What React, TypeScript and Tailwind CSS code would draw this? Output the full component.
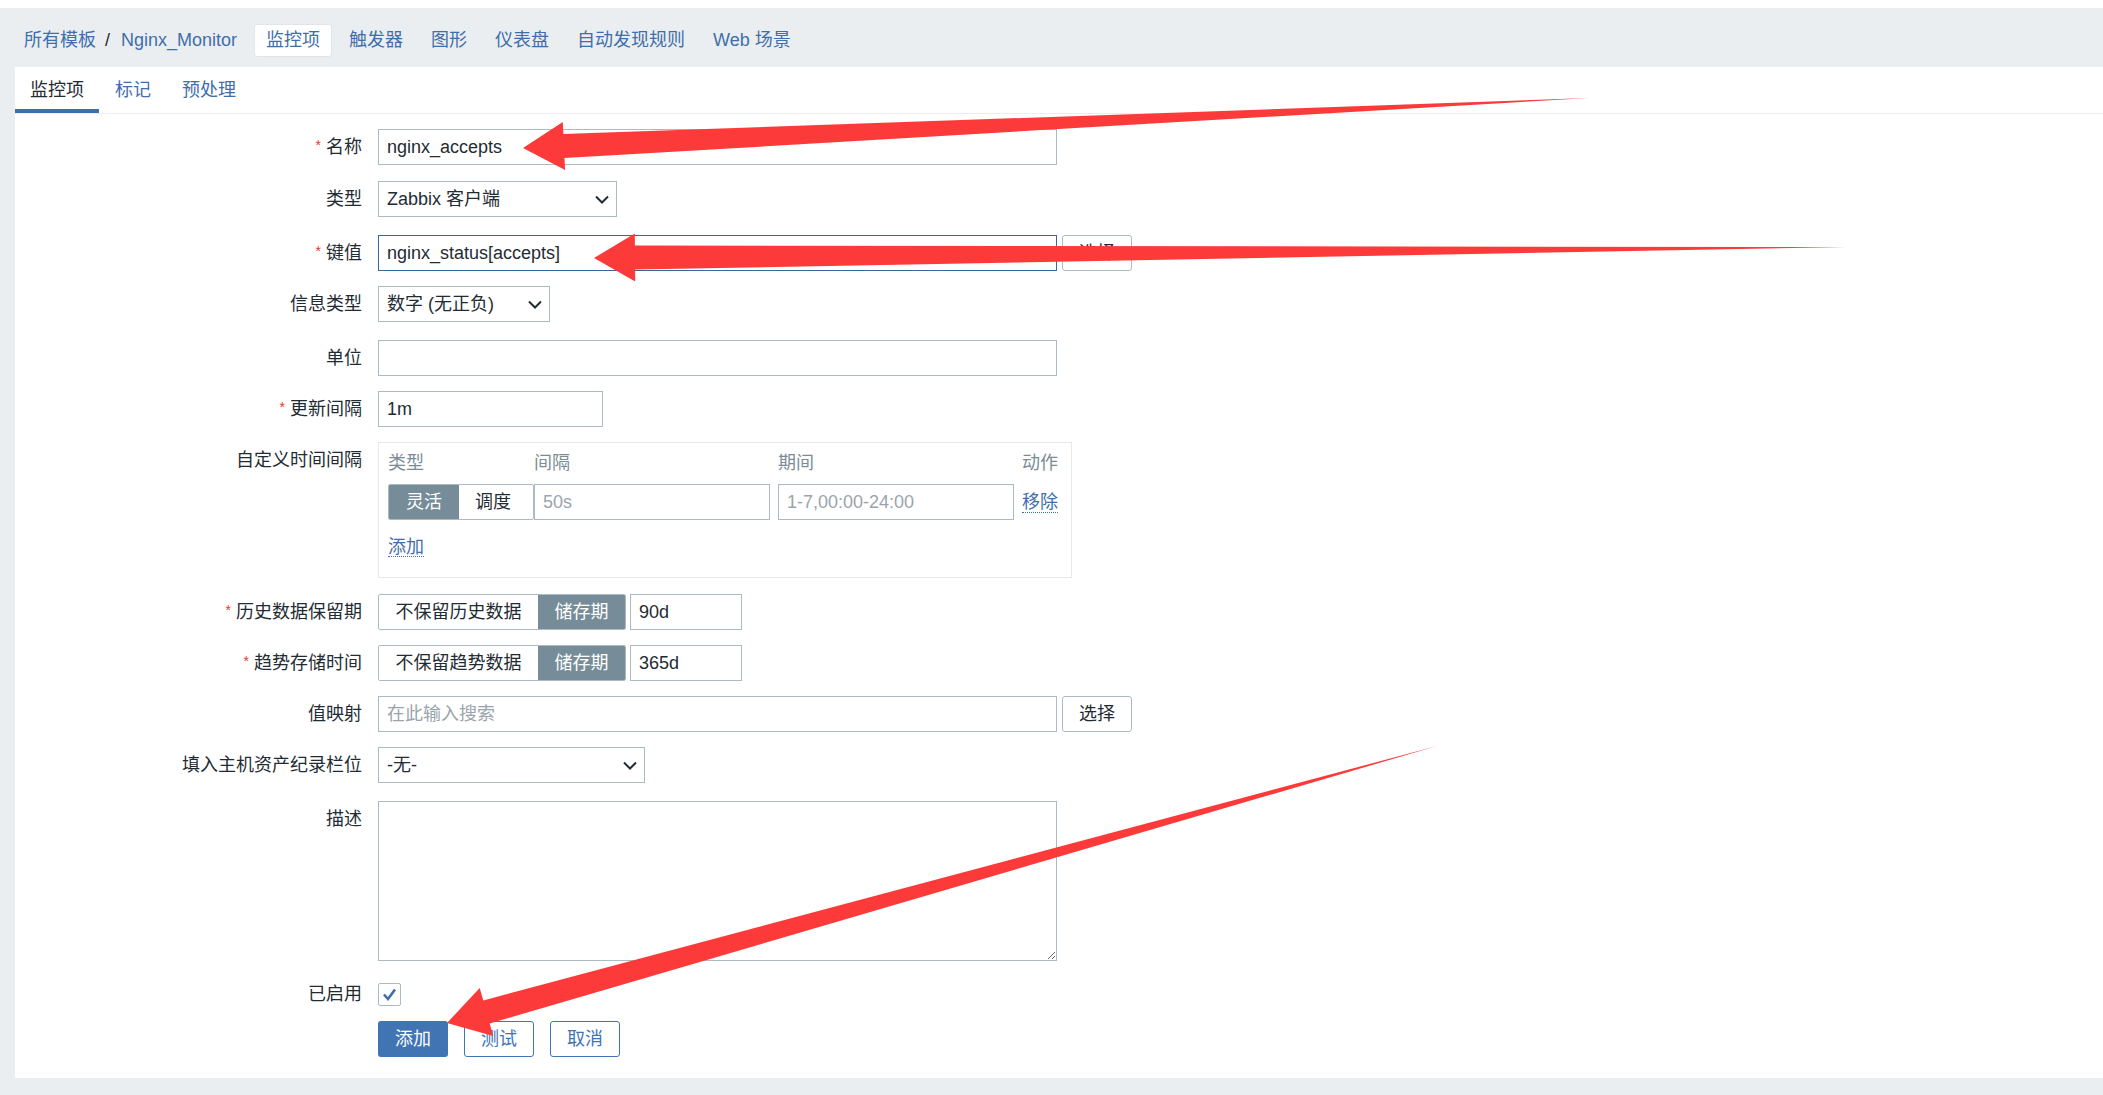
import type { ReactNode } from "react";

const LINK = "#3f6eaa";

type Pt = [number, number];

// red annotation arrows drawn over the form
const arrowPoints = (tip: Pt, tail: Pt, headLen = 41, headHalf = 24, shaftHalf = 12) => {
  const dx = tail[0] - tip[0];
  const dy = tail[1] - tip[1];
  const len = Math.hypot(dx, dy);
  const ux = dx / len;
  const uy = dy / len;
  const nx = -uy;
  const ny = ux;
  const bx = tip[0] + ux * headLen;
  const by = tip[1] + uy * headLen;
  const pts: Pt[] = [
    tip,
    [bx + nx * headHalf, by + ny * headHalf],
    [bx + nx * shaftHalf, by + ny * shaftHalf],
    tail,
    [bx - nx * shaftHalf, by - ny * shaftHalf],
    [bx - nx * headHalf, by - ny * headHalf],
  ];
  return pts.map((p) => `${p[0].toFixed(1)},${p[1].toFixed(1)}`).join(" ");
};

const Chevron = () => (
  <svg width="14" height="9" viewBox="0 0 14 9" className="shrink-0">
    <path d="M1 1.5 L7 7.5 L13 1.5" fill="none" stroke="#1f2c33" strokeWidth="2" />
  </svg>
);

const Select = ({ value, width }: { value: string; width: string }) => (
  <div className={`${width} h-[36px] border border-[#acbbc2] bg-white flex items-center justify-between pl-[8px] pr-[7px] text-[#1f2c33]`}>
    <span>{value}</span>
    <Chevron />
  </div>
);

const TextInput = ({
  value,
  placeholder,
  width,
  focused,
}: {
  value?: string;
  placeholder?: string;
  width: string;
  focused?: boolean;
}) => (
  <input
    readOnly
    defaultValue={value}
    placeholder={placeholder}
    className={`${width} h-[36px] border ${focused ? "border-[#38679d]" : "border-[#acbbc2]"} bg-white px-[8px] text-[18px] text-[#1f2c33] placeholder:text-[#9aa5ab] outline-none`}
  />
);

const GrayButton = ({ children }: { children: ReactNode }) => (
  <button className="w-[70px] h-[36px] border border-[#acbbc2] rounded-[3px] bg-white text-[#1f2c33] text-[18px]">
    {children}
  </button>
);

const Segmented = ({ items }: { items: { label: string; width: string; active?: boolean }[] }) => (
  <div className="flex h-[36px] border border-[#acbbc2] rounded-[2px] overflow-hidden">
    {items.map((it) => (
      <div
        key={it.label}
        className={`${it.width} flex items-center justify-center ${it.active ? "bg-[#768d99] text-white" : "bg-white text-[#1f2c33]"}`}
      >
        {it.label}
      </div>
    ))}
  </div>
);

const Row = ({
  label,
  required,
  mt = "",
  children,
}: {
  label: string;
  required?: boolean;
  mt?: string;
  children: ReactNode;
}) => (
  <div className={`flex ${mt}`}>
    <div className="w-[347px] shrink-0 h-[36px] leading-[36px] text-right text-[#1f2c33]">
      {required && <span className="relative -top-[3px] mr-[5px] text-[14px] text-[#e33734]">*</span>}
      {label}
    </div>
    <div className="ml-[16px] flex items-start gap-[5px]">{children}</div>
  </div>
);

const DottedLink = ({ children }: { children: ReactNode }) => (
  <span className="whitespace-nowrap text-[#3f6eaa] border-b border-dotted border-[#3f6eaa] leading-[20px]">{children}</span>
);

export default function App() {
  const navItems = ["触发器", "图形", "仪表盘", "自动发现规则", "Web 场景"];

  return (
    <div className="relative w-[2103px] h-[1095px] overflow-hidden bg-[#ebeef0] text-[18px] font-['Liberation_Sans','Noto_Sans_CJK_SC',sans-serif]">
      <div className="h-[8px] bg-white" />

      {/* breadcrumb / sub navigation */}
      <header className="h-[59px] pt-[5px] flex items-center pl-[24px]">
        <span style={{ color: LINK }}>所有模板</span>
        <span className="ml-[9px] mr-[11px] text-[#1f2c33]">/</span>
        <span className="text-[#3f6eaa]">Nginx_Monitor</span>
        <div className="ml-[17px] flex items-center gap-[6px]">
          <span className="h-[33px] px-[11px] flex items-center bg-white border border-[#e0e5e8] rounded-[3px] text-[#3f6eaa]">
            监控项
          </span>
          {navItems.map((n) => (
            <span key={n} className="px-[11px] text-[#3f6eaa]">
              {n}
            </span>
          ))}
        </div>
      </header>

      <main className="ml-[15px] h-[1011px] bg-white">
        {/* tabs */}
        <div className="h-[47px] flex border-b border-[#ebeef0]">
          <div className="h-full px-[15px] pt-[4px] flex items-center border-b-4 border-[#3f6eaa] text-[#1f2c33]">监控项</div>
          <div className="h-full px-[15px] ml-[1px] flex items-center text-[#3f6eaa]">标记</div>
          <div className="h-full px-[15px] ml-[1px] flex items-center text-[#3f6eaa]">预处理</div>
        </div>

        <div className="pt-[15px] flex flex-col gap-[15px]">
          <Row label="名称" required>
            <TextInput value="nginx_accepts" width="w-[679px]" />
          </Row>
          <Row label="类型" mt="mt-[1px]">
            <Select value="Zabbix 客户端" width="w-[239px]" />
          </Row>
          <Row label="键值" required mt="mt-[3px]">
            <TextInput value="nginx_status[accepts]" width="w-[679px]" focused />
            <GrayButton>选择</GrayButton>
          </Row>
          <Row label="信息类型">
            <Select value="数字 (无正负)" width="w-[172px]" />
          </Row>
          <Row label="单位" mt="mt-[3px]">
            <TextInput width="w-[679px]" />
          </Row>
          <Row label="更新间隔" required>
            <TextInput value="1m" width="w-[225px]" />
          </Row>
          <Row label="自定义时间间隔">
            <div className="w-[694px] h-[136px] border border-[#e6e9eb] pl-[9px] pr-[12px] pt-[4px]">
              <div className="h-[32px] flex items-center text-[#7b8c96] whitespace-nowrap">
                <span className="w-[146px] shrink-0">类型</span>
                <span className="w-[244px] shrink-0">间隔</span>
                <span className="w-[244px] shrink-0">期间</span>
                <span>动作</span>
              </div>
              <div className="mt-[5px] flex items-center">
                <div className="w-[146px] shrink-0">
                  <Segmented
                    items={[
                      { label: "灵活", width: "w-[70px]", active: true },
                      { label: "调度", width: "w-[68px]" },
                    ]}
                  />
                </div>
                <div className="w-[244px] shrink-0">
                  <TextInput placeholder="50s" width="w-[236px]" />
                </div>
                <div className="w-[244px] shrink-0">
                  <TextInput placeholder="1-7,00:00-24:00" width="w-[236px]" />
                </div>
                <DottedLink>移除</DottedLink>
              </div>
              <div className="mt-[17px] h-[20px] flex">
                <DottedLink>添加</DottedLink>
              </div>
            </div>
          </Row>
          <Row label="历史数据保留期" required mt="mt-[1px]">
            <div className="flex gap-[4px]">
              <Segmented
                items={[
                  { label: "不保留历史数据", width: "w-[159px]" },
                  { label: "储存期", width: "w-[87px]", active: true },
                ]}
              />
              <TextInput value="90d" width="w-[112px]" />
            </div>
          </Row>
          <Row label="趋势存储时间" required>
            <div className="flex gap-[4px]">
              <Segmented
                items={[
                  { label: "不保留趋势数据", width: "w-[159px]" },
                  { label: "储存期", width: "w-[87px]", active: true },
                ]}
              />
              <TextInput value="365d" width="w-[112px]" />
            </div>
          </Row>
          <Row label="值映射">
            <TextInput placeholder="在此输入搜索" width="w-[679px]" />
            <GrayButton>选择</GrayButton>
          </Row>
          <Row label="填入主机资产纪录栏位">
            <Select value="-无-" width="w-[267px]" />
          </Row>
          <Row label="描述" mt="mt-[3px]">
            <textarea readOnly className="w-[679px] h-[160px] border border-[#acbbc2] outline-none" />
          </Row>
          <Row label="已启用">
            <div className="h-[36px] flex items-center">
              <div className="w-[23px] h-[23px] border border-[#acbbc2] rounded-[2px] flex items-center justify-center">
                <svg width="15" height="13" viewBox="0 0 15 13">
                  <path d="M2 6.5 L6 11 L13 1.5" fill="none" stroke="#3f6eaa" strokeWidth="2.6" />
                </svg>
              </div>
            </div>
          </Row>
        </div>

        <div className="mt-[9px] ml-[363px] flex gap-[16px]">
          <button className="w-[70px] h-[36px] rounded-[3px] bg-[#4074b3] text-white text-[18px]">添加</button>
          <button className="w-[70px] h-[36px] rounded-[3px] border border-[#4074b3] bg-white text-[#4074b3] text-[18px]">测试</button>
          <button className="w-[70px] h-[36px] rounded-[3px] border border-[#4074b3] bg-white text-[#4074b3] text-[18px]">取消</button>
        </div>
      </main>

      <svg className="absolute left-0 top-0 pointer-events-none" width="2103" height="1095">
        <polygon points={arrowPoints([523, 148], [1589, 98])} fill="#fd3a3a" />
        <polygon points={arrowPoints([594, 258], [1846, 247])} fill="#fd3a3a" />
        <polygon points={arrowPoints([447, 1023], [1437, 746], 41, 25, 12)} fill="#fd3a3a" />
      </svg>
    </div>
  );
}
